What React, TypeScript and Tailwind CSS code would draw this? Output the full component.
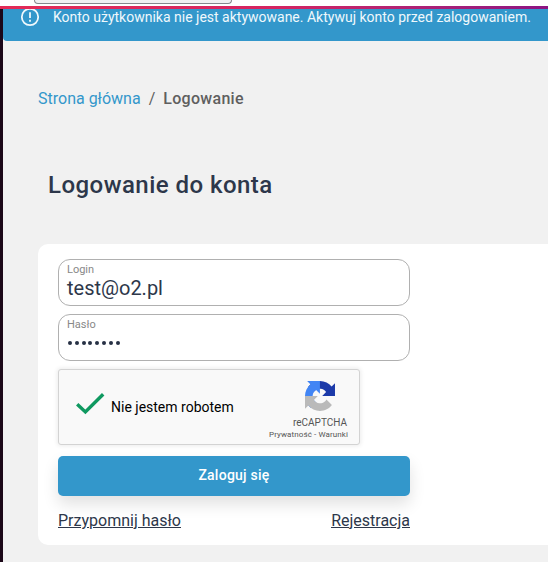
import React from "react";

function AlertBanner() {
  return (
    <div className="flex h-8 items-start overflow-hidden rounded-bl-[4px] bg-[#3397cb] pl-[17px] text-[#eff8fc]">
      <svg className="-mt-[2px] h-5 w-5 shrink-0" viewBox="0 0 20 20" fill="none" stroke="currentColor" strokeWidth="1.8">
        <circle cx="10" cy="10" r="8.2" />
        <path d="M10 5.3v5.7M10 12.7v2" />
      </svg>
      <p className="ml-[13px] whitespace-nowrap text-[14px] leading-4">
        Konto użytkownika nie jest aktywowane. Aktywuj konto przed zalogowaniem.
      </p>
    </div>
  );
}

function Field({ label, value, dots }: { label: string; value?: string; dots?: number }) {
  return (
    <div className="h-[47px] rounded-[12px] border border-[#b0b0b0] pl-2">
      <div className="pt-[3px] text-[11px] leading-[13px] text-[#888]">{label}</div>
      {dots ? (
        <div className="mt-[10px] flex gap-[2.8px] pl-[1px]">
          {Array.from({ length: dots }, (_, i) => (
            <span key={i} className="h-1 w-1 rounded-full bg-[#263044]" />
          ))}
        </div>
      ) : (
        <div className="text-[20px] leading-[25px] text-[#2d374a]">{value}</div>
      )}
    </div>
  );
}

function CaptchaLogo() {
  return (
    <svg className="h-[30px] w-[30px]" viewBox="0 0 64 64">
      <path fill="#1c3aa9" d="M64 31.955l-.033-1.37V4.687l-7.16 7.16C50.948 4.674 42.033.093 32.05.093c-10.4 0-19.622 4.96-25.458 12.64l11.736 11.86a15.55 15.55 0 0 1 4.754-5.334c2.05-1.6 4.952-2.906 8.968-2.906.485 0 .86.057 1.135.163 4.976.393 9.288 3.14 11.828 7.124l-8.307 8.307L64 31.953" />
      <path fill="#4285f4" d="M31.862.094l-1.37.033H4.594l7.16 7.16C4.58 13.147 0 22.06 0 32.046c0 10.4 4.96 19.622 12.64 25.458L24.5 45.768a15.55 15.55 0 0 1-5.334-4.754c-1.6-2.05-2.906-4.952-2.906-8.968 0-.485.057-.86.163-1.135.393-4.976 3.14-9.288 7.124-11.828l8.307 8.307L31.86.095" />
      <path fill="#bababa" d="M.001 32.045l.033 1.37v25.898l7.16-7.16c5.86 7.173 14.774 11.754 24.76 11.754 10.4 0 19.622-4.96 25.458-12.64l-11.736-11.86a15.55 15.55 0 0 1-4.754 5.334c-2.05 1.6-4.952 2.906-8.968 2.906-.485 0-.86-.057-1.135-.163-4.976-.393-9.288-3.14-11.828-7.124l8.307-8.307c-10.522.04-22.4.066-27.295-.005" />
    </svg>
  );
}

function Captcha() {
  return (
    <div className="flex h-[76px] w-[302px] rounded-[3px] border border-[#d3d3d3] bg-[#f9f9f9] shadow-[0_0_4px_1px_rgba(0,0,0,0.08)]">
      <svg className="mt-[22px] ml-[17px] h-6 w-[30px] shrink-0" viewBox="0 0 30 24" fill="none" stroke="#0f9960" strokeWidth="3.4">
        <path d="M1.2 12.2L9.4 20L27.2 2.2" />
      </svg>
      <p className="mt-[28px] ml-[5px] whitespace-nowrap text-[14px] leading-[18px] text-black">Nie jestem robotem</p>
      <div className="mr-[11px] ml-auto flex flex-col items-end pt-[11px] text-[#555]">
        <div className="mr-[13px]"><CaptchaLogo /></div>
        <div className="mt-[6px] mr-[1px] text-[10px] leading-3">reCAPTCHA</div>
        <div className="mt-[1px] whitespace-nowrap text-[8px] leading-[10px] tracking-[0.1px]">Prywatność - Warunki</div>
      </div>
    </div>
  );
}

export default function App() {
  return (
    <div className="flex h-[562px] w-[548px] flex-col overflow-hidden bg-[#f1f1f1] font-['Roboto',sans-serif]">
      <div className="flex h-[6px] shrink-0 items-start bg-white pl-[34px]">
        <div className="h-[4px] w-[198px] rounded-b-[8px] border border-t-0 border-[#85878e] bg-[#f0f0f2]" />
      </div>
      <div className="h-[3px] shrink-0 bg-linear-to-r from-[#e32b57] via-[#d52461] via-50% to-[#8c1383]" />
      <div className="flex flex-1">
        <div className="w-[3px] shrink-0 bg-[#1b0718]" />
        <main className="min-w-0 flex-1">
          <AlertBanner />
          <nav className="mt-[48px] ml-[35px] flex text-[16px] leading-5 text-[#5f5f5f]">
            <a className="text-[#3397cb]">Strona główna</a>
            <span className="mx-2">/</span>
            <span className="font-medium tracking-[0.3px]">Logowanie</span>
          </nav>
          <h1 className="mt-[62px] ml-[45px] text-[24px] leading-[28px] font-medium tracking-[0.46px] text-[#2d374a]">Logowanie do konta</h1>
          <section className="mt-[45px] ml-[35px] h-[301px] rounded-l-[10px] bg-white pt-[15px] pl-5">
            <form className="flex w-[352px] flex-col gap-2">
              <Field label="Login" value="test@o2.pl" />
              <Field label="Hasło" dots={8} />
              <Captcha />
              <button type="button" className="mt-[3px] h-10 rounded-[5px] bg-[#3397cb] pb-[2px] text-[14px] font-medium tracking-[0.25px] text-white shadow-[0_8px_16px_rgba(0,0,0,0.12)]">
                Zaloguj się
              </button>
              <div className="mt-[7px] flex justify-between text-[16px] leading-5 text-[#2d374a] underline">
                <a>Przypomnij hasło</a>
                <a>Rejestracja</a>
              </div>
            </form>
          </section>
        </main>
      </div>
    </div>
  );
}
